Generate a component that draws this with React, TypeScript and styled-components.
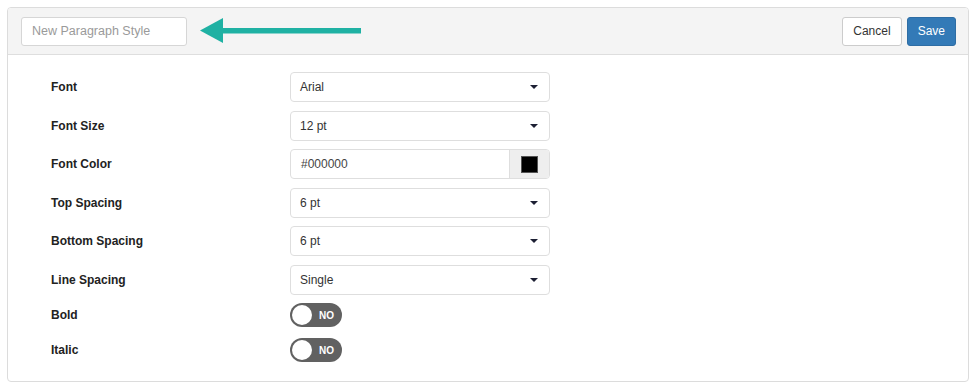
import React from "react";
import styled, { createGlobalStyle } from "styled-components";

const Global = createGlobalStyle`
  html, body { margin: 0; padding: 0; background: #fff; }
  body { font-family: "Liberation Sans", Arial, Helvetica, sans-serif; color: #333; }
  * { box-sizing: border-box; }
`;

const Page = styled.div`
  padding: 7px 5px 0 7px;
  width: 974px;
`;

const Panel = styled.div`
  border: 1px solid #dcdcdc;
  border-radius: 4px;
  height: 375px;
  overflow: hidden;
  background: #fff;
`;

const Header = styled.div`
  display: flex;
  align-items: center;
  height: 47px;
  padding: 0 12px 0 13px;
  background: #f4f4f4;
  border-bottom: 1px solid #dedede;
`;

const NameInput = styled.input`
  width: 166px;
  height: 29px;
  border: 1px solid #d6d6d6;
  border-radius: 3px;
  padding: 0 10px;
  font-family: inherit;
  font-size: 12.5px;
  color: #333;
  background: #fff;
  outline: none;
  &::placeholder { color: #9a9a9a; }
`;

const ArrowWrap = styled.div`
  margin-left: 13px;
  display: flex;
  align-items: center;
`;

const Spacer = styled.div`
  flex: 1;
`;

const Button = styled.button<{ $primary?: boolean }>`
  height: 29px;
  padding: 0 ${(p) => (p.$primary ? "10px" : "10px")};
  margin-left: 5px;
  border-radius: 3px;
  font-family: inherit;
  font-size: 12px;
  border: 1px solid ${(p) => (p.$primary ? "#2e6da4" : "#ccc")};
  background: ${(p) => (p.$primary ? "#337ab7" : "#fff")};
  color: ${(p) => (p.$primary ? "#fff" : "#333")};
`;

const Form = styled.div`
  display: grid;
  grid-template-columns: 239px 260px;
  row-gap: 8.5px;
  padding: 17px 0 0 43px;
  align-items: center;
`;

const Label = styled.div<{ $toggle?: boolean }>`
  font-size: 12px;
  font-weight: bold;
  color: #222;
  height: ${(p) => (p.$toggle ? "24px" : "30px")};
  align-self: ${(p) => (p.$toggle ? "start" : "center")};
  display: flex;
  align-items: center;
`;

const SelectBox = styled.div`
  height: 30px;
  border: 1px solid #dedede;
  border-radius: 4px;
  display: flex;
  align-items: center;
  padding: 0 10px 0 9px;
  font-size: 12px;
  color: #333;
  background: #fff;
`;

const SelectText = styled.span`
  flex: 1;
`;

const Caret = styled.span`
  width: 0;
  height: 0;
  border-left: 4px solid transparent;
  border-right: 4px solid transparent;
  border-top: 4.5px solid #1c1f33;
  margin-right: 1px;
`;

const ColorGroup = styled.div`
  height: 30px;
  display: flex;
  border: 1px solid #dedede;
  border-radius: 4px;
  overflow: hidden;
  font-size: 12px;
`;

const ColorText = styled.div`
  flex: 1;
  display: flex;
  align-items: center;
  padding-left: 10px;
  color: #444;
`;

const ColorAddon = styled.div`
  width: 40px;
  background: #eee;
  border-left: 1px solid #dedede;
  display: flex;
  align-items: center;
  justify-content: center;
`;

const Swatch = styled.div<{ $color: string }>`
  width: 17px;
  height: 17px;
  background: ${(p) => p.$color};
  border: 1px solid #555;
`;

const ToggleCell = styled.div`
  height: 26.5px;
  display: flex;
  align-items: flex-start;
`;

const Toggle = styled.div`
  width: 52px;
  height: 24px;
  border-radius: 12px;
  background: #616161;
  display: flex;
  align-items: center;
  padding-left: 2px;
`;

const Knob = styled.div`
  width: 20px;
  height: 20px;
  border-radius: 50%;
  background: #fff;
`;

const ToggleText = styled.span`
  color: #fff;
  font-size: 10px;
  font-weight: bold;
  margin-left: 7px;
`;

const Arrow = () => (
  <svg width="161" height="26" viewBox="0 0 161 26">
    <polygon points="0,12.5 23,0 23,25" fill="#1fb1a3" />
    <rect x="22" y="10" width="139" height="5.5" fill="#1fb1a3" />
  </svg>
);

const selects: [string, string][] = [
  ["Font", "Arial"],
  ["Font Size", "12 pt"],
];
const selects2: [string, string][] = [
  ["Top Spacing", "6 pt"],
  ["Bottom Spacing", "6 pt"],
  ["Line Spacing", "Single"],
];

export default function App() {
  return (
    <>
      <Global />
      <Page>
        <Panel>
          <Header>
            <NameInput placeholder="New Paragraph Style" />
            <ArrowWrap>
              <Arrow />
            </ArrowWrap>
            <Spacer />
            <Button>Cancel</Button>
            <Button $primary>Save</Button>
          </Header>
          <Form>
            {selects.map(([l, v]) => (
              <React.Fragment key={l}>
                <Label>{l}</Label>
                <SelectBox>
                  <SelectText>{v}</SelectText>
                  <Caret />
                </SelectBox>
              </React.Fragment>
            ))}
            <Label>Font Color</Label>
            <ColorGroup>
              <ColorText>#000000</ColorText>
              <ColorAddon>
                <Swatch $color="#000" />
              </ColorAddon>
            </ColorGroup>
            {selects2.map(([l, v]) => (
              <React.Fragment key={l}>
                <Label>{l}</Label>
                <SelectBox>
                  <SelectText>{v}</SelectText>
                  <Caret />
                </SelectBox>
              </React.Fragment>
            ))}
            {["Bold", "Italic"].map((l) => (
              <React.Fragment key={l}>
                <Label $toggle>{l}</Label>
                <ToggleCell>
                  <Toggle>
                    <Knob />
                    <ToggleText>NO</ToggleText>
                  </Toggle>
                </ToggleCell>
              </React.Fragment>
            ))}
          </Form>
        </Panel>
      </Page>
    </>
  );
}
